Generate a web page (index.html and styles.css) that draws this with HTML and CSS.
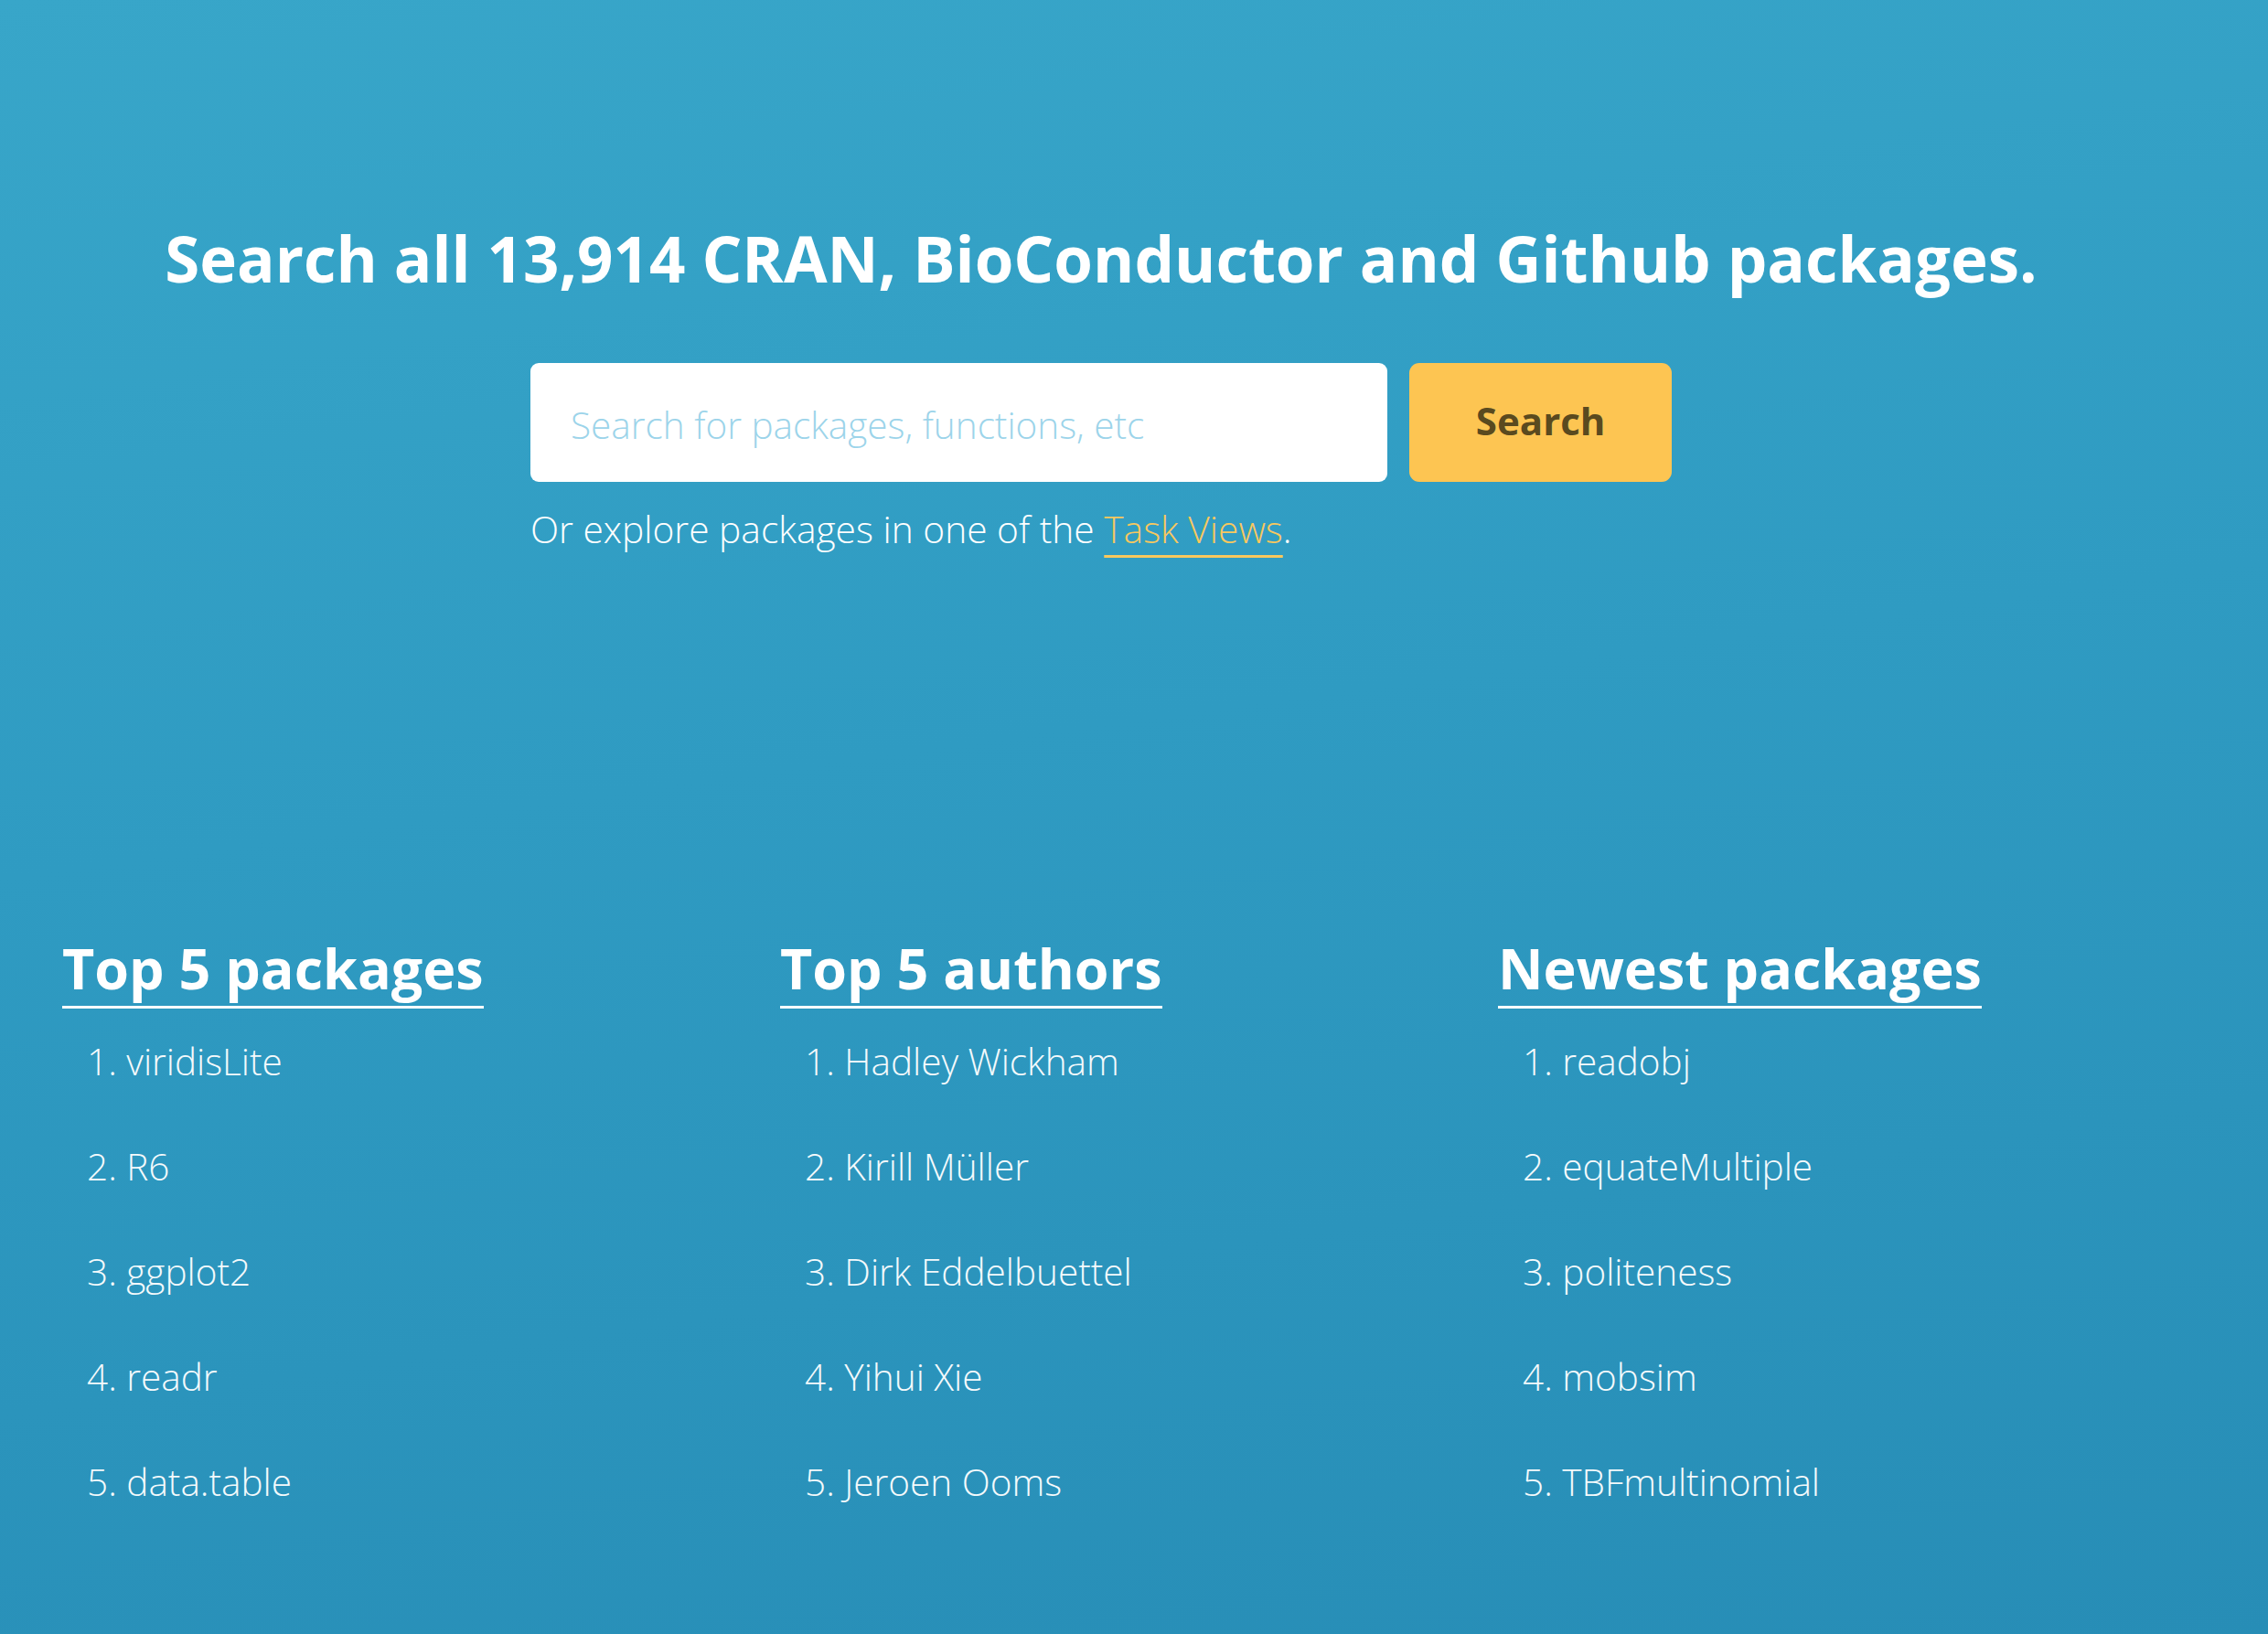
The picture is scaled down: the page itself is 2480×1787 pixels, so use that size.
FILE: index.html
```html
<!DOCTYPE html>
<html lang="en">
<head>
<meta charset="utf-8">
<title>Search packages</title>
<link rel="stylesheet" href="styles.css">
</head>
<body>
<main class="page">
  <section class="hero">
    <h1 class="hero-title">Search all 13,914 CRAN, BioConductor and Github packages.</h1>
    <div class="search-block">
      <form class="search-form" onsubmit="return false;">
        <input class="search-input" type="text" placeholder="Search for packages, functions, etc">
        <button class="search-button" type="submit">Search</button>
      </form>
      <p class="explore">Or explore packages in one of the <a class="explore-link" href="#">Task Views</a>.</p>
    </div>
  </section>
  <section class="tops">
    <div class="top-col">
      <h2 class="top-title"><span class="top-title-text">Top 5 packages</span></h2>
      <ol class="top-list">
        <li>viridisLite</li>
        <li>R6</li>
        <li>ggplot2</li>
        <li>readr</li>
        <li>data.table</li>
      </ol>
    </div>
    <div class="top-col">
      <h2 class="top-title"><span class="top-title-text">Top 5 authors</span></h2>
      <ol class="top-list">
        <li>Hadley Wickham</li>
        <li>Kirill Müller</li>
        <li>Dirk Eddelbuettel</li>
        <li>Yihui Xie</li>
        <li>Jeroen Ooms</li>
      </ol>
    </div>
    <div class="top-col">
      <h2 class="top-title"><span class="top-title-text">Newest packages</span></h2>
      <ol class="top-list">
        <li>readobj</li>
        <li>equateMultiple</li>
        <li>politeness</li>
        <li>mobsim</li>
        <li>TBFmultinomial</li>
      </ol>
    </div>
  </section>
</main>
</body>
</html>
```

FILE: styles.css
```css
html, body {
  margin: 0;
  padding: 0;
}

body {
  min-height: 1787px;
  background: linear-gradient(172deg, #38a6c9 0%, #2f9bc2 45%, #278db6 100%);
  font-family: "Open Sans", "Liberation Sans", sans-serif;
  color: #ffffff;
}

.page {
  display: flex;
  flex-direction: column;
}

.hero {
  padding: 236px 72px 0 0;
  display: flex;
  flex-direction: column;
  align-items: center;
}

.hero-title {
  margin: 0;
  font-size: 69px;
  line-height: 92px;
  font-weight: 700;
  letter-spacing: 0;
  text-align: center;
  white-space: nowrap;
}

.search-block {
  margin-top: 69px;
  width: 1248px;
  display: flex;
  flex-direction: column;
}

.search-form {
  display: flex;
  gap: 24px;
  margin: 0;
}

.search-input {
  box-sizing: border-box;
  width: 938px;
  height: 130px;
  border: none;
  border-radius: 9px;
  background: #ffffff;
  padding: 4px 0 0 44px;
  font-family: "Open Sans", "Liberation Sans", sans-serif;
  font-weight: 300;
  font-size: 40.5px;
  color: #333;
  outline: none;
}

.search-input::placeholder {
  color: #9cd4ea;
  opacity: 1;
}

.search-button {
  box-sizing: border-box;
  width: 287px;
  height: 130px;
  border: none;
  border-radius: 11px;
  background: #fdc552;
  color: #5a4a1f;
  font-family: "Open Sans", "Liberation Sans", sans-serif;
  font-weight: 700;
  font-size: 42px;
  padding: 0 0 6px 0;
  cursor: pointer;
}

.explore {
  margin: 23px 0 0 0;
  font-size: 40.7px;
  line-height: 56px;
  font-weight: 300;
  color: #ffffff;
}

.explore-link {
  color: #f8c85e;
  text-decoration: underline;
  text-decoration-thickness: 3px;
  text-underline-offset: 13px;
  text-decoration-skip-ink: none;
}

.tops {
  margin-top: 414px;
  padding: 0 57px 0 68px;
  display: grid;
  grid-template-columns: repeat(3, 1fr);
}

.top-col {
  display: flex;
  flex-direction: column;
}

.top-title {
  margin: 0;
  font-size: 61px;
  line-height: 77px;
  font-weight: 700;
}

.top-title-text {
  display: inline-block;
  padding-bottom: 3px;
  border-bottom: 3px solid #ffffff;
}

.top-list {
  list-style: none;
  margin: 0;
  padding: 0 0 0 27px;
  counter-reset: item;
}

.top-list li {
  counter-increment: item;
  font-size: 40.5px;
  line-height: 115px;
  font-weight: 300;
  color: #f4fafc;
}

.top-list li::before {
  content: counter(item) ". ";
}
```
